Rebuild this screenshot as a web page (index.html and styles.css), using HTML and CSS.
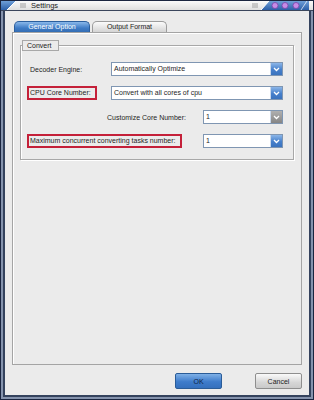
FILE: index.html
```html
<!DOCTYPE html>
<html lang="en">
<head>
  <meta charset="UTF-8">
  <title>Settings</title>
  <link rel="stylesheet" href="styles.css">
</head>
<body>

  <div class="window">
    <div class="titlebar">
      <svg class="corner-left" width="16" height="9" viewBox="0 0 16 9">
        <defs>
          <linearGradient id="cl" x1="0" y1="0" x2="0" y2="1">
            <stop offset="0" stop-color="#6f9fd8"/>
            <stop offset="1" stop-color="#2c5fa8"/>
          </linearGradient>
        </defs>
        <polygon points="0,0 15,0 6,9 0,9" fill="url(#cl)"/>
        <line x1="15" y1="0" x2="6" y2="9" stroke="#ffffff" stroke-width="1"/>
      </svg>
      <span class="grip"></span>
      <span class="title">Settings</span>
      <span class="spacer"></span>
      <span class="grip"></span>
      <svg class="corner-right" width="48" height="9" viewBox="0 0 48 9">
        <defs>
          <linearGradient id="cr" x1="0" y1="0" x2="0" y2="1">
            <stop offset="0" stop-color="#6f9fd8"/>
            <stop offset="1" stop-color="#2c5fa8"/>
          </linearGradient>
        </defs>
        <polygon points="8,0 48,0 48,9 0,9" fill="url(#cr)"/>
        <line x1="8" y1="0" x2="0" y2="9" stroke="#ffffff" stroke-width="1"/>
        <line x1="46" y1="0" x2="40" y2="9" stroke="#ffffff" stroke-width="1" opacity="0.7"/>
        <circle cx="14" cy="4.5" r="3" fill="#c68be6" stroke="#7a3fa8" stroke-width="0.8"/>
        <circle cx="24" cy="4.5" r="3" fill="#c68be6" stroke="#7a3fa8" stroke-width="0.8"/>
        <circle cx="35" cy="4.5" r="3" fill="#c68be6" stroke="#7a3fa8" stroke-width="0.8"/>
      </svg>
    </div>

    <div class="frame">
      <div class="tabs">
        <div class="tab active">General Option</div>
        <div class="tab">Output Format</div>
      </div>

      <div class="pane">
        <fieldset class="group">
          <legend>Convert</legend>
          <div class="rows">
            <div class="row">
              <span class="label wide">Decoder Engine:</span>
              <div class="combo grow">
                <span class="value">Automatically Optimize</span>
                <span class="arrow"><svg width="7" height="5" viewBox="0 0 7 5"><path d="M1 1 L3.5 3.5 L6 1" fill="none" stroke="#fff" stroke-width="1.3"/></svg></span>
              </div>
            </div>
            <div class="row">
              <span class="label wide"><span class="marked">CPU Core Number:</span></span>
              <div class="combo grow">
                <span class="value">Convert with all cores of cpu</span>
                <span class="arrow"><svg width="7" height="5" viewBox="0 0 7 5"><path d="M1 1 L3.5 3.5 L6 1" fill="none" stroke="#fff" stroke-width="1.3"/></svg></span>
              </div>
            </div>
            <div class="row">
              <span class="label indent">Customize Core Number:</span>
              <div class="combo small disabled">
                <span class="value">1</span>
                <span class="arrow"><svg width="7" height="5" viewBox="0 0 7 5"><path d="M1 1 L3.5 3.5 L6 1" fill="none" stroke="#fff" stroke-width="1.3"/></svg></span>
              </div>
            </div>
            <div class="row">
              <span class="label"><span class="marked">Maximum concurrent converting tasks number:</span></span>
              <div class="combo small">
                <span class="value">1</span>
                <span class="arrow"><svg width="7" height="5" viewBox="0 0 7 5"><path d="M1 1 L3.5 3.5 L6 1" fill="none" stroke="#fff" stroke-width="1.3"/></svg></span>
              </div>
            </div>
          </div>
        </fieldset>
      </div>

      <div class="footer">
        <button class="btn ok">OK</button>
        <button class="btn cancel">Cancel</button>
      </div>
    </div>
  </div>

</body>
</html>
```

FILE: styles.css
```css
body {
  margin: 0;
  width: 314px;
  height: 400px;
  font-family: "Liberation Sans", Arial, sans-serif;
  font-size: 7px;
  color: #1e1e1e;
}

.window {
  box-sizing: border-box;
  width: 314px;
  height: 400px;
  display: flex;
  flex-direction: column;
  border: 1px solid #1a2540;
  padding: 0 2px 2px 2px;
  background: #8593ad;
}

/* title bar */
.titlebar {
  height: 9px;
  margin: 0 -2px;
  display: flex;
  align-items: center;
  background: linear-gradient(#fafafa, #dedede);
  border-bottom: 1px solid #3a465c;
}

.corner-left,
.corner-right {
  display: block;
  flex: none;
}

.grip {
  width: 6px;
  height: 5px;
  margin: 0 3px;
  background-image: radial-gradient(#9a9a9a 0.6px, transparent 0.8px);
  background-size: 2px 2px;
}

.title {
  margin-left: 2px;
  font-size: 7.5px;
  color: #222;
}

.spacer {
  flex: 1;
}

.corner-right {
  margin-right: 4px;
}

/* main frame */
.frame {
  flex: 1;
  display: flex;
  flex-direction: column;
  border: 2px solid #34425d;
  border-top: none;
  background: #ebebeb;
  padding: 10px 7px 0 7px;
}

.tabs {
  display: flex;
  gap: 2px;
  padding-left: 2px;
}

.tab {
  width: 73px;
  height: 10px;
  line-height: 10px;
  text-align: center;
  border: 1px solid #9c9c9c;
  border-bottom: none;
  border-radius: 5px 5px 0 0;
  background: linear-gradient(#fbfbfb, #d4d4d4);
  color: #1e1e1e;
}

.tab.active {
  width: 74px;
  border-color: #2b5f9e;
  background: linear-gradient(#8ab8ea, #3f7cc6 60%, #336db4);
  color: #fff;
}

.pane {
  flex: 1;
  border: 1px solid #a4a4a4;
  box-shadow: inset 1px 1px 0 #fff;
  padding: 7px 7px 0 7px;
}

.group {
  margin: 0;
  padding: 0;
  border: 1px solid #a8a8a8;
  box-shadow: inset 1px 1px 0 #fff, 1px 1px 0 #fff;
}

.group legend {
  margin-left: 1px;
  padding: 0 4px;
  height: 9px;
  line-height: 9px;
  width: 27px;
  border: 1px solid #a8a8a8;
  background: #ebebeb;
  color: #222;
}

.rows {
  display: flex;
  flex-direction: column;
  gap: 10px;
  padding: 11px 10px 11px 9px;
}

.row {
  display: flex;
  align-items: center;
  height: 14px;
}

.label {
  white-space: nowrap;
}

.label.wide {
  width: 81px;
  flex: none;
}

.label.indent {
  padding-left: 77px;
}

.marked {
  display: inline-block;
  margin-left: -3px;
  padding: 1px 4px 1px 1px;
  border: 2px solid #c42039;
  line-height: 8px;
}

.combo {
  box-sizing: border-box;
  height: 14px;
  display: flex;
  align-items: stretch;
  border: 1px solid #7f96b2;
  background: #fff;
}

.combo.grow {
  flex: 1;
}

.combo.small {
  width: 80px;
  margin-left: auto;
}

.combo .value {
  flex: 1;
  padding-left: 2px;
  line-height: 12px;
}

.combo .arrow {
  width: 11px;
  display: flex;
  align-items: center;
  justify-content: center;
  background: linear-gradient(#8cb6e8, #4680cc 55%, #3a72bd);
  border-left: 1px solid #c9d8ec;
}

.combo.disabled .arrow {
  background: linear-gradient(#b0b0b0, #858585);
}

/* bottom buttons */
.footer {
  display: flex;
  justify-content: flex-end;
  gap: 33px;
  padding: 8px 0 6px 0;
}

.btn {
  width: 47px;
  height: 16px;
  padding: 0;
  font-family: "Liberation Sans", Arial, sans-serif;
  font-size: 7px;
  border-radius: 2px;
}

.ok {
  border: 1px solid #2a5c98;
  background: linear-gradient(#7fb0e6, #3e7ccb 55%, #3470bd);
  color: #0e2444;
}

.cancel {
  border: 1px solid #8e8e8e;
  background: linear-gradient(#fafafa, #d6d6d6 60%, #c9c9c9);
  color: #222;
}
```
